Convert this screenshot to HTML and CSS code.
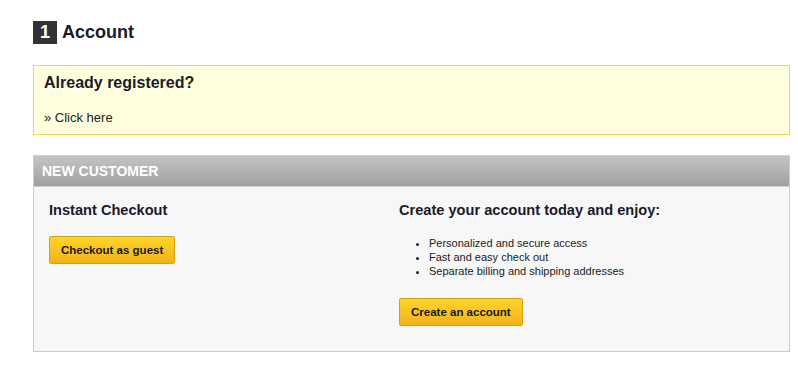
FILE: index.html
```html
<!DOCTYPE html>
<html lang="en">
<head>
    <meta charset="UTF-8">
    <title>Checkout - Account</title>
    <link rel="stylesheet" href="styles.css">
</head>
<body>
    <div class="step">
        <h1 class="step-title"><span class="step-num">1</span> Account</h1>

        <div class="login-box">
            <h2>Already registered?</h2>
            <a href="#" class="login-link">» Click here</a>
        </div>

        <div class="customer-box">
            <div class="customer-head">NEW CUSTOMER</div>
            <div class="customer-body">
                <div class="col">
                    <h3>Instant Checkout</h3>
                    <button class="btn">Checkout as guest</button>
                </div>
                <div class="col">
                    <h3>Create your account today and enjoy:</h3>
                    <ul class="perks">
                        <li>Personalized and secure access</li>
                        <li>Fast and easy check out</li>
                        <li>Separate billing and shipping addresses</li>
                    </ul>
                    <button class="btn">Create an account</button>
                </div>
            </div>
        </div>
    </div>
</body>
</html>
```

FILE: styles.css
```css
body {
    margin: 0;
    font-family: "Liberation Sans", Arial, sans-serif;
    color: #222;
    background: #fff;
}

.step {
    padding: 21px 8px 0 33px;
}

.step-title {
    display: flex;
    align-items: center;
    gap: 5px;
    margin: 0 0 21px;
    font-size: 18px;
    line-height: 23px;
    color: #1a1a2a;
}

.step-num {
    display: inline-block;
    width: 24px;
    height: 23px;
    background: #333;
    color: #fff;
    text-align: center;
}

.login-box {
    background: #ffffdd;
    border: 1px solid #e3da4f;
    padding: 7px 10px 8px;
    margin-bottom: 20px;
    height: 53px;
}

.login-box h2 {
    margin: 0 0 15px;
    font-size: 16px;
    line-height: 20px;
    color: #1a1a2a;
}

.login-link {
    font-size: 13px;
    color: #222;
    text-decoration: none;
}

.customer-box {
    border: 1px solid #ccc;
    background: #f7f7f7;
}

.customer-head {
    background: linear-gradient(#c4c4c4, #a0a0a0);
    color: #fff;
    font-weight: bold;
    font-size: 14px;
    line-height: 30px;
    padding: 0 8px;
    border-bottom: 1px solid #d0d0d0;
}

.customer-body {
    display: grid;
    grid-template-columns: 350px 1fr;
    padding: 14px 15px 23px;
    height: 127px;
}

.col h3 {
    margin: 0 0 17px;
    font-size: 14.6px;
    line-height: 18px;
    color: #1a1a2a;
}

.perks {
    margin: 1px 0 20px;
    padding-left: 30px;
    font-size: 11px;
    line-height: 14px;
}

.btn {
    background: linear-gradient(#fdd52b, #f2b11a);
    border: 1px solid #d5a10a;
    border-radius: 2px;
    font-family: inherit;
    font-weight: bold;
    font-size: 11.5px;
    color: #1a1a1a;
    padding: 0 11px;
    height: 28px;
    cursor: pointer;
}
```
